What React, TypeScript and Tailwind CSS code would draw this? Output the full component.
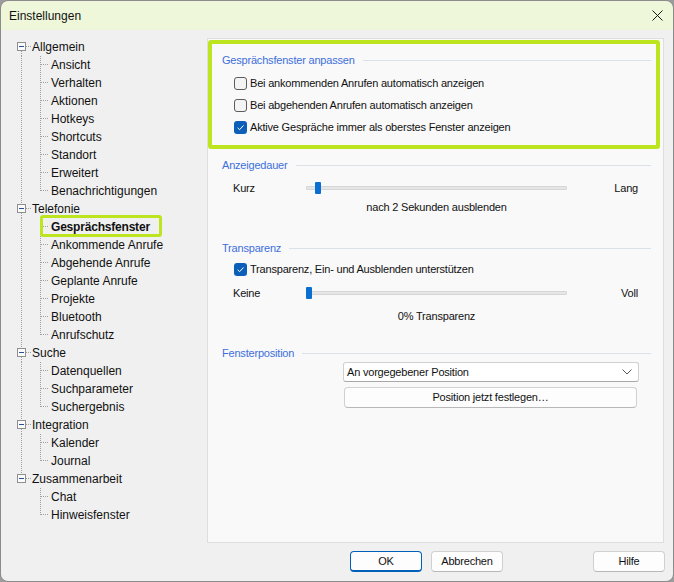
import React from 'react'

type Node = { label: string; children: string[] }

const tree: Node[] = [
  {
    label: 'Allgemein',
    children: ['Ansicht', 'Verhalten', 'Aktionen', 'Hotkeys', 'Shortcuts', 'Standort', 'Erweitert', 'Benachrichtigungen'],
  },
  {
    label: 'Telefonie',
    children: ['Gesprächsfenster', 'Ankommende Anrufe', 'Abgehende Anrufe', 'Geplante Anrufe', 'Projekte', 'Bluetooth', 'Anrufschutz'],
  },
  { label: 'Suche', children: ['Datenquellen', 'Suchparameter', 'Suchergebnis'] },
  { label: 'Integration', children: ['Kalender', 'Journal'] },
  { label: 'Zusammenarbeit', children: ['Chat', 'Hinweisfenster'] },
]

const dot = { stroke: '#a0a0a0', strokeDasharray: '1 1', shapeRendering: 'crispEdges' as const }

function TopRow({ label, first, last }: { label: string; first: boolean; last: boolean }) {
  return (
    <div className="flex h-[18px] items-center">
      <svg width="31" height="18" className="shrink-0">
        {!first && <line x1="20.5" y1="0" x2="20.5" y2="4" {...dot} />}
        {!last && <line x1="20.5" y1="13" x2="20.5" y2="18" {...dot} />}
        <line x1="25" y1="8.5" x2="30" y2="8.5" {...dot} />
        <rect x="16.5" y="4.5" width="8" height="8" fill="#fbfbfb" stroke="#8f8f8f" shapeRendering="crispEdges" />
        <line x1="18" y1="8.5" x2="23" y2="8.5" stroke="#2a4f9a" shapeRendering="crispEdges" />
      </svg>
      <span>{label}</span>
    </div>
  )
}

function ChildRow({
  label,
  parentLast,
  lastChild,
  selected,
}: {
  label: string
  parentLast: boolean
  lastChild: boolean
  selected: boolean
}) {
  return (
    <div className="flex h-[18px] items-center">
      <svg width="50" height="18" className="shrink-0">
        {!parentLast && <line x1="20.5" y1="0" x2="20.5" y2="18" {...dot} />}
        <line x1="39.5" y1="0" x2="39.5" y2={lastChild ? 9 : 18} {...dot} />
        <line x1="40" y1="8.5" x2="48" y2="8.5" {...dot} />
      </svg>
      {selected ? (
        <span className="relative font-bold tracking-[-0.2px]">
          {label}
          <span className="absolute top-[-3px] right-[-12px] bottom-[-1px] left-[-11px] rounded-[3px] border-[3px] border-[#bce51f]" />
        </span>
      ) : (
        <span>{label}</span>
      )}
    </div>
  )
}

function Checkbox({ checked, label }: { checked: boolean; label: string }) {
  return (
    <div className="flex h-[22px] items-center gap-[3px] pl-[26px]">
      {checked ? (
        <span className="flex h-[13px] w-[13px] items-center justify-center rounded-[3px] bg-[#0b5fb8]">
          <svg width="13" height="13" viewBox="0 0 13 13">
            <path d="M3.6 6.8 L5.6 8.7 L9.5 4.4" fill="none" stroke="#ffffff" strokeWidth="1" />
          </svg>
        </span>
      ) : (
        <span className="h-[13px] w-[13px] rounded-[3px] border border-[#5c5c5c] bg-[#f4f4f4]" />
      )}
      <span>{label}</span>
    </div>
  )
}

function GroupTitle({ title }: { title: string }) {
  return (
    <div className="flex h-4 items-center gap-2">
      <span className="text-[#3d6fdc]">{title}</span>
      <div className="h-px flex-1 bg-[#dbe1e8]" />
    </div>
  )
}

function Slider({ left, right, pos }: { left: string; right: string; pos: number }) {
  return (
    <div className="flex h-5 items-center pr-[25px] pl-[26px]">
      <span className="w-[73px]">{left}</span>
      <div className="relative h-[4px] w-[261px] rounded-[1px] border border-[#d6d6d6] bg-[#e6e6e6]">
        <span
          className="absolute top-[-5px] h-[12px] w-[6px] rounded-[1px] bg-[#0a6fd0]"
          style={{ left: pos }}
        />
      </div>
      <span className="flex-1 text-right">{right}</span>
    </div>
  )
}

function Caption({ text }: { text: string }) {
  return (
    <div className="flex h-4 items-center pl-[99px]">
      <span className="w-[261px] text-center">{text}</span>
    </div>
  )
}

function Button({ children, primary }: { children: React.ReactNode; primary?: boolean }) {
  return (
    <button
      className={
        primary
          ? 'flex h-[21px] w-[72px] items-center justify-center rounded-[4px] border border-b-2 border-[#005fb8] bg-[#fdfdfd]'
          : 'flex h-[21px] w-[72px] items-center justify-center rounded-[4px] border border-[#d0d0d0] border-b-[#b8b8b8] bg-[#fdfdfd]'
      }
    >
      {children}
    </button>
  )
}

export default function App() {
  return (
    <div className="h-[582px] w-[674px] bg-[#9c9c9c] font-['Liberation_Sans',Arial,sans-serif] text-[12px] text-[#111]">
      <div className="flex h-full flex-col overflow-hidden rounded-[8px] border border-[#8c8c8c]">
        <div className="flex h-[29px] items-center justify-between bg-[#eff7da] pr-[10px] pl-[8px]">
          <span>Einstellungen</span>
          <svg width="11" height="11" viewBox="0 0 11 11">
            <path d="M0.5 0.5 L10.5 10.5 M10.5 0.5 L0.5 10.5" stroke="#1a1a1a" strokeWidth="1" />
          </svg>
        </div>
        <div className="flex flex-1 flex-col bg-[#f0f0f0]">
          <div className="flex pt-[8px]">
            <div className="w-[206px] shrink-0">
              {tree.map((n, i) => (
                <React.Fragment key={n.label}>
                  <TopRow label={n.label} first={i === 0} last={i === tree.length - 1} />
                  {n.children.map((c, j) => (
                    <ChildRow
                      key={c}
                      label={c}
                      parentLast={i === tree.length - 1}
                      lastChild={j === n.children.length - 1}
                      selected={c === 'Gesprächsfenster'}
                    />
                  ))}
                </React.Fragment>
              ))}
            </div>
            <div className="h-[505px] w-[457px] border border-[#dedede] bg-[#f9f9f9] text-[11px] tracking-[-0.2px]">
              <div className="mt-[1px] mr-[3px] rounded-[3px] border-4 border-[#bce51f] pt-[8px] pr-[5px] pb-[7px] pl-[10px]">
                <GroupTitle title="Gesprächsfenster anpassen" />
                <div className="mt-[4px] -ml-[14px]">
                  <Checkbox checked={false} label="Bei ankommenden Anrufen automatisch anzeigen" />
                  <Checkbox checked={false} label="Bei abgehenden Anrufen automatisch anzeigen" />
                  <Checkbox checked label="Aktive Gespräche immer als oberstes Fenster anzeigen" />
                </div>
              </div>

              <div className="mt-[8px] pr-[12px] pl-[14px]">
                <GroupTitle title="Anzeigedauer" />
              </div>
              <div className="mt-[5px] -ml-[1px]">
                <Slider left="Kurz" right="Lang" pos={8} />
              </div>
              <div className="mt-[1px] -ml-[1px]">
                <Caption text="nach 2 Sekunden ausblenden" />
              </div>

              <div className="mt-[25px] pr-[12px] pl-[14px]">
                <GroupTitle title="Transparenz" />
              </div>
              <div className="mt-[2px]">
                <Checkbox checked label="Transparenz, Ein- und Ausblenden unterstützen" />
              </div>
              <div className="mt-[3px] -ml-[1px]">
                <Slider left="Keine" right="Voll" pos={-1} />
              </div>
              <div className="mt-[5px] -ml-[1px]">
                <Caption text="0% Transparenz" />
              </div>

              <div className="mt-[21px] pr-[12px] pl-[14px]">
                <GroupTitle title="Fensterposition" />
              </div>
              <div className="mt-[1px] pl-[135px]">
                <div className="flex h-[20px] w-[296px] items-center justify-between rounded-[3px] border border-[#d0d0d0] border-b-[#a8a8a8] bg-white pr-[6px] pl-[3px]">
                  <span>An vorgegebener Position</span>
                  <svg width="10" height="6" viewBox="0 0 10 6">
                    <path d="M0.5 0.5 L5 5 L9.5 0.5" fill="none" stroke="#555" strokeWidth="1" />
                  </svg>
                </div>
                <div className="mt-[5px] ml-[1px] flex h-[21px] w-[293px] items-center justify-center rounded-[4px] border border-[#d0d0d0] border-b-[#b8b8b8] bg-[#fdfdfd]">
                  Position jetzt festlegen…
                </div>
              </div>
            </div>
          </div>
          <div className="mt-[8px] flex pr-[8px] pl-[349px] text-[11px] tracking-[-0.2px]">
            <div className="flex gap-[9px]">
              <Button primary>OK</Button>
              <Button>Abbrechen</Button>
            </div>
            <div className="ml-auto">
              <Button>Hilfe</Button>
            </div>
          </div>
        </div>
      </div>
    </div>
  )
}
